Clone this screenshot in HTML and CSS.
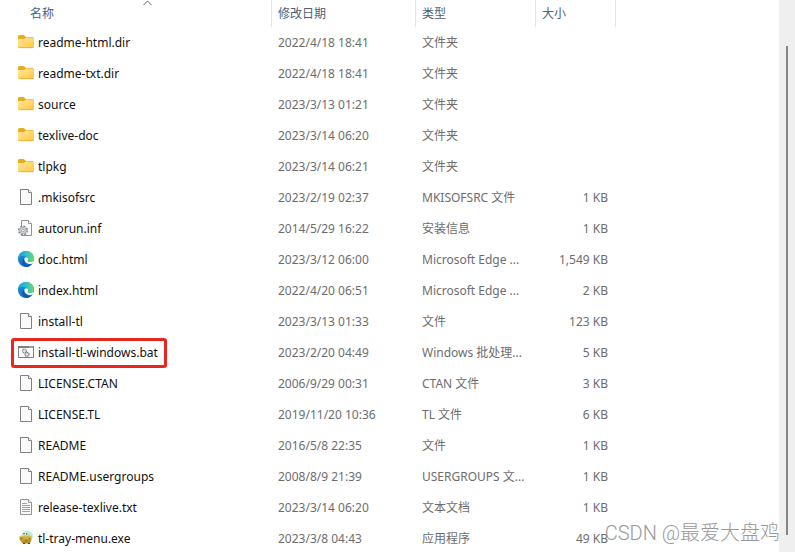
FILE: index.html
```html
<!DOCTYPE html>
<html lang="zh-CN">
<head>
<meta charset="utf-8">
<title>texlive</title>
<link rel="stylesheet" href="styles.css">
</head>
<body>
<svg class="defs" aria-hidden="true">
  <defs>
    <linearGradient id="gold" x1="0" y1="0" x2="1" y2="1"><stop offset="0" stop-color="#ffe7a0"/><stop offset="1" stop-color="#ffc83c"/></linearGradient>
    <linearGradient id="sea" x1="0" y1="0" x2="1" y2="0"><stop offset="0" stop-color="#1b9fdc"/><stop offset=".5" stop-color="#2cc0cf"/><stop offset="1" stop-color="#74dc50"/></linearGradient>
    <linearGradient id="deep" x1="0" y1="0" x2="0" y2="1"><stop offset="0" stop-color="#1b8fe0"/><stop offset="1" stop-color="#1270c8"/></linearGradient>
    <linearGradient id="fish" x1="0" y1="0" x2="0" y2="1"><stop offset="0" stop-color="#ead45a"/><stop offset="1" stop-color="#a98420"/></linearGradient>
    <symbol id="folder" viewBox="0 0 16 16">
      <path d="M0 2.5Q0 1 1.500 1h4.200L8 3h6.500Q16 3 16 4.500V8H0z" fill="#e9ac1b"/>
      <path d="M0 5h6.200L8 3.600h6.500Q16 3.600 16 5v7.500Q16 14 14.500 14h-13Q0 14 0 12.500z" fill="url(#gold)"/>
      <path d="M.5 13.200q.3.500 1 .5h13q.7 0 1-.5" fill="none" stroke="#dca033" stroke-width=".7"/>
    </symbol>
    <symbol id="page" viewBox="0 0 16 16">
      <path d="M2.500.5h8l3 3v12h-11z" fill="#fafafa" stroke="#808080"/>
      <path d="M10.500.5v3h3" fill="#fff" stroke="#808080"/>
    </symbol>
    <symbol id="config" viewBox="0 0 16 16">
      <path d="M3.500.5h7l3 3v12h-10z" fill="#fafafa" stroke="#929292"/>
      <path d="M10.500.5v3h3" fill="#fff" stroke="#929292"/>
      <circle cx="5" cy="10.500" r="4.300" fill="#e8eaec" stroke="#858b90" stroke-width="1.500" stroke-dasharray="2 1.370"/>
      <circle cx="5" cy="10.500" r="3.200" fill="#dfe3e6" stroke="#90969b" stroke-width=".7"/>
      <circle cx="5" cy="10.500" r="1.400" fill="#fff" stroke="#858b90" stroke-width=".8"/>
    </symbol>
    <symbol id="edge" viewBox="0 0 16 16">
      <circle cx="8" cy="8" r="8" fill="url(#deep)"/>
      <path d="M.1 7C.6 3 4 0 8 0c4.800 0 8 3.600 8 7.200 0 2.400-1.700 3.900-3.800 3.900-1.700 0-2.700-.7-2.500-1.300.8-.9.6-2.100 0-2.900C7.800 4.400 2.500 4.200.1 7z" fill="url(#sea)"/>
      <path d="M6.500 7.200C5 11.200 8.800 14.900 13.400 13.500 11.500 15.400 9.800 16 8 16 4.500 15.500 2.700 9.200 6.500 7.200z" fill="#1558a5"/>
      <path d="M6.500 7.200c.8-1.300 2.600-1.300 3.300-.2.500.9.400 1.900-.1 2.600-.5.700.7 1.500 2.500 1.500 1.400 0 2.400-.5 3-1 1 0 1 1.200-.4 2.400-3.500 1.500-9.300-.8-8.300-5.300z" fill="#fff"/>
    </symbol>
    <symbol id="batch" viewBox="0 0 16 16">
      <path d="M.5 2.500h15v11H.5z" fill="#fafafa" stroke="#808080"/>
      <path d="M0 2h16v2H0z" fill="#808080"/>
      <path d="M11.500 3h1m1 0h1" stroke="#fff"/>
      <circle cx="6.500" cy="7" r="2" fill="#dfe3ea" stroke="#8a9098" stroke-width="1.200" stroke-dasharray="1.200 .5"/>
      <circle cx="9" cy="10.300" r="2" fill="#dfe3ea" stroke="#737a83" stroke-width="1.200" stroke-dasharray="1.200 .5"/>
    </symbol>
    <symbol id="text" viewBox="0 0 16 16">
      <path d="M2.500.5h8l3 3v12h-11z" fill="#fafafa" stroke="#939393"/>
      <path d="M10.500.5v3h3" fill="#fff" stroke="#939393"/>
      <path d="M4 4.500h5M4 6.500h8M4 8.500h8M4 10.500h8M4 12.500h8" stroke="#a0a0a0"/>
    </symbol>
    <symbol id="tray" viewBox="0 0 16 16">
      <ellipse cx="9" cy="6" rx="6" ry="5.500" fill="#b8f0de"/>
      <path d="M1 6.500l4-.5 1-2.500Q9 1.500 11 4l1 2.500L13.800 5.500 13.500 9q0 4-3.500 4.500H6Q3.500 13 3 11L1.200 10 2 8.500z" fill="url(#fish)"/>
      <path d="M1.500 8L5 8.500M7 10.500l3 .5M11.500 8l-.5 2" fill="none" stroke="#8a6b16" stroke-width=".8"/>
      <path d="M5 13.500h2m3 0h2" stroke="#54420f"/>
      <circle cx="6.200" cy="3.800" r="1.500" fill="#fff"/><circle cx="9" cy="4" r="1.500" fill="#fff"/>
      <circle cx="6" cy="3.800" r=".8" fill="#222"/><circle cx="8.800" cy="4" r=".8" fill="#222"/>
    </symbol>
  </defs>
</svg>
<main class="explorer">
  <div class="pane">
    <table class="files">
      <colgroup><col class="col-name"><col class="col-date"><col class="col-type"><col class="col-size"></colgroup>
      <thead>
        <tr>
          <th class="first" aria-sort="ascending"><button type="button">名称</button><svg class="sort" viewBox="0 0 9 6" aria-hidden="true"><path d="M.5 5L4.500 1l4 4"/></svg></th>
          <th><button type="button">修改日期</button></th>
          <th><button type="button">类型</button></th>
          <th><button type="button">大小</button></th>
        </tr>
      </thead>
      <tbody>
        <tr><td><span class="file"><svg><use href="#folder"/></svg>readme-html.dir</span></td><td>2022/4/18 18:41</td><td>文件夹</td><td></td></tr>
        <tr><td><span class="file"><svg><use href="#folder"/></svg>readme-txt.dir</span></td><td>2022/4/18 18:41</td><td>文件夹</td><td></td></tr>
        <tr><td><span class="file"><svg><use href="#folder"/></svg>source</span></td><td>2023/3/13 01:21</td><td>文件夹</td><td></td></tr>
        <tr><td><span class="file"><svg><use href="#folder"/></svg>texlive-doc</span></td><td>2023/3/14 06:20</td><td>文件夹</td><td></td></tr>
        <tr><td><span class="file"><svg><use href="#folder"/></svg>tlpkg</span></td><td>2023/3/14 06:21</td><td>文件夹</td><td></td></tr>
        <tr><td><span class="file"><svg><use href="#page"/></svg>.mkisofsrc</span></td><td>2023/2/19 02:37</td><td>MKISOFSRC 文件</td><td>1 KB</td></tr>
        <tr><td><span class="file"><svg><use href="#config"/></svg>autorun.inf</span></td><td>2014/5/29 16:22</td><td>安装信息</td><td>1 KB</td></tr>
        <tr><td><span class="file"><svg><use href="#edge"/></svg>doc.html</span></td><td>2023/3/12 06:00</td><td>Microsoft Edge ...</td><td>1,549 KB</td></tr>
        <tr><td><span class="file"><svg><use href="#edge"/></svg>index.html</span></td><td>2022/4/20 06:51</td><td>Microsoft Edge ...</td><td>2 KB</td></tr>
        <tr><td><span class="file"><svg><use href="#page"/></svg>install-tl</span></td><td>2023/3/13 01:33</td><td>文件</td><td>123 KB</td></tr>
        <tr><td><span class="file marked"><svg><use href="#batch"/></svg>install-tl-windows.bat</span></td><td>2023/2/20 04:49</td><td>Windows 批处理...</td><td>5 KB</td></tr>
        <tr><td><span class="file"><svg><use href="#page"/></svg>LICENSE.CTAN</span></td><td>2006/9/29 00:31</td><td>CTAN 文件</td><td>3 KB</td></tr>
        <tr><td><span class="file"><svg><use href="#page"/></svg>LICENSE.TL</span></td><td>2019/11/20 10:36</td><td>TL 文件</td><td>6 KB</td></tr>
        <tr><td><span class="file"><svg><use href="#page"/></svg>README</span></td><td>2016/5/8 22:35</td><td>文件</td><td>1 KB</td></tr>
        <tr><td><span class="file"><svg><use href="#page"/></svg>README.usergroups</span></td><td>2008/8/9 21:39</td><td>USERGROUPS 文...</td><td>1 KB</td></tr>
        <tr><td><span class="file"><svg><use href="#text"/></svg>release-texlive.txt</span></td><td>2023/3/14 06:20</td><td>文本文档</td><td>1 KB</td></tr>
        <tr><td><span class="file"><svg><use href="#tray"/></svg>tl-tray-menu.exe</span></td><td>2023/3/8 04:43</td><td>应用程序</td><td>49 KB</td></tr>
      </tbody>
    </table>
  </div>
  <div class="scrollbar"><div class="thumb"></div></div>
  <div class="watermark">CSDN @最爱大盘鸡</div>
</main>
</body>
</html>
```
FILE: styles.css
```css
body {
  margin: 0;
  background: #fff;
  color: #6d6d6d;
  font: 12px/16px "Noto Sans", "Noto Sans CJK SC", sans-serif;
}

.defs {
  position: absolute;
  width: 0;
  height: 0;
}

.explorer {
  position: relative;
  display: flex;
  height: 100vh;
  overflow: hidden;
}

.pane {
  flex: 1;
  min-width: 0;
  overflow: hidden;
}

.files {
  table-layout: fixed;
  width: 616px;
  border-collapse: separate;
  border-spacing: 0;
}

.col-name { width: 272px; }
.col-date { width: 144px; }
.col-type { width: 120px; }
.col-size { width: 80px; }

th {
  position: relative;
  box-sizing: border-box;
  height: 27px;
  padding: 0 6px;
  border-right: 1px solid #e2e2e2;
  text-align: left;
}

th.first {
  padding-left: 30px;
}

th button {
  display: block;
  padding: 0;
  border: 0;
  background: none;
  color: #4c607a;
  font: inherit;
  font-weight: 400;
}

.sort {
  position: absolute;
  top: 0;
  left: 143px;
  width: 9px;
  height: 6px;
  fill: none;
  stroke: #666;
}

td {
  box-sizing: border-box;
  height: 31px;
  padding: 0 6px;
  white-space: nowrap;
}

td:first-child {
  padding-left: 18px;
}

td:last-child {
  padding-right: 8px;
  text-align: right;
}

.file {
  position: relative;
  display: inline-flex;
  align-items: center;
  gap: 4px;
  color: #111;
  vertical-align: middle;
}

.file svg {
  flex: none;
  width: 16px;
  height: 16px;
  margin-bottom: 2px;
}

.marked::after {
  content: "";
  position: absolute;
  inset: -6px -9px -6px -7px;
  border: 3px solid #e8281f;
  border-radius: 3px;
}

.scrollbar {
  box-sizing: border-box;
  display: flex;
  justify-content: center;
  width: 16px;
  padding: 46px 0 17px;
  background: #efefef;
}

.thumb {
  width: 2px;
  background: #858585;
}

.watermark {
  position: absolute;
  right: 15px;
  bottom: 5px;
  color: #999;
  font: 300 20px/28px Roboto, "Noto Sans CJK SC", sans-serif;
}
```
